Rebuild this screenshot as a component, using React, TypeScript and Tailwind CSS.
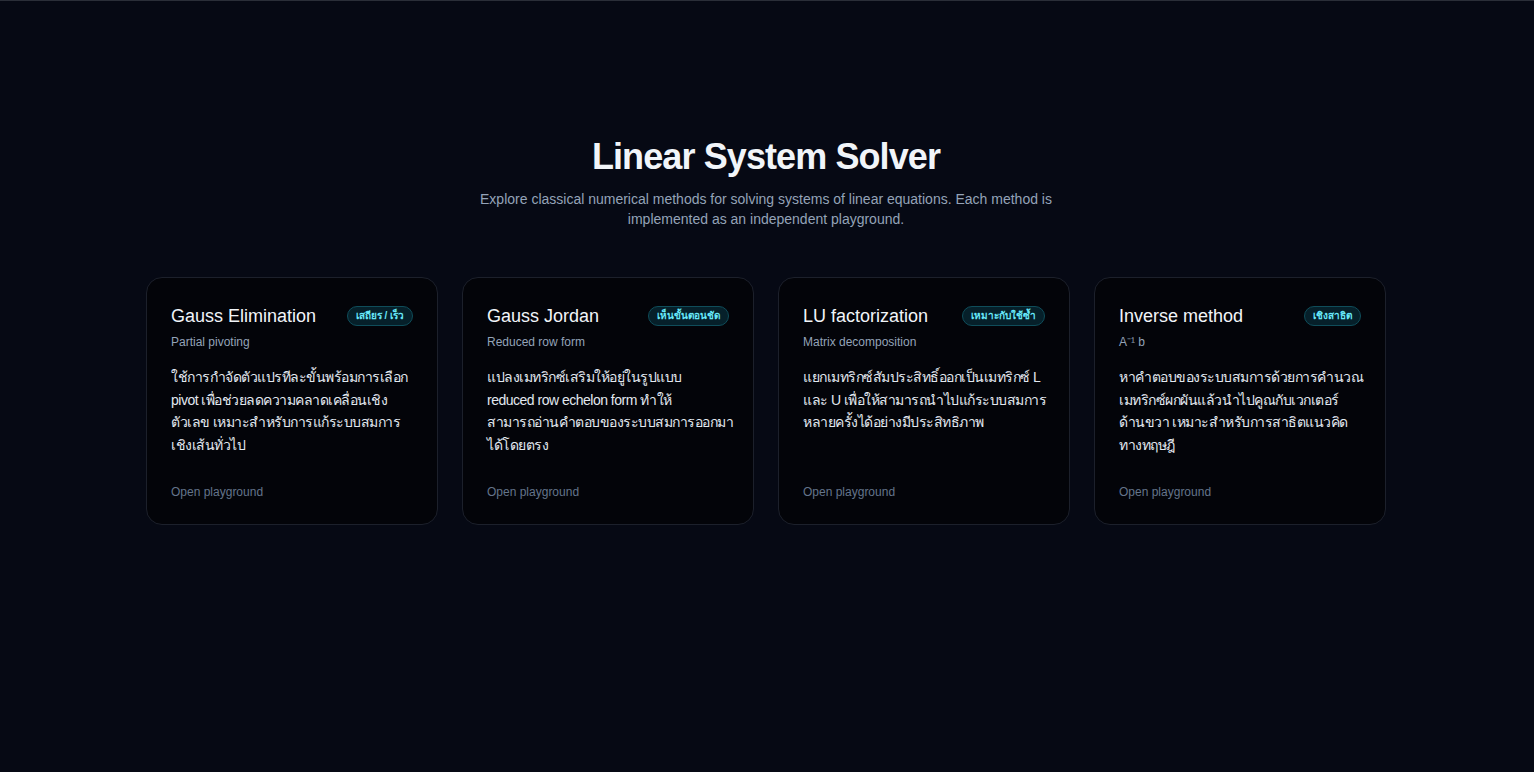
const methods = [
  {
    title: "Gauss Elimination",
    badge: "เสถียร / เร็ว",
    sub: "Partial pivoting",
    desc: [
      "ใช้การกำจัดตัวแปรทีละขั้นพร้อมการเลือก",
      "pivot เพื่อช่วยลดความคลาดเคลื่อนเชิง",
      "ตัวเลข เหมาะสำหรับการแก้ระบบสมการ",
      "เชิงเส้นทั่วไป",
    ],
  },
  {
    title: "Gauss Jordan",
    badge: "เห็นขั้นตอนชัด",
    sub: "Reduced row form",
    desc: [
      "แปลงเมทริกซ์เสริมให้อยู่ในรูปแบบ",
      "reduced row echelon form ทำให้",
      "สามารถอ่านคำตอบของระบบสมการออกมา",
      "ได้โดยตรง",
    ],
  },
  {
    title: "LU factorization",
    badge: "เหมาะกับใช้ซ้ำ",
    sub: "Matrix decomposition",
    desc: [
      "แยกเมทริกซ์สัมประสิทธิ์ออกเป็นเมทริกซ์ L",
      "และ U เพื่อให้สามารถนำไปแก้ระบบสมการ",
      "หลายครั้งได้อย่างมีประสิทธิภาพ",
    ],
  },
  {
    title: "Inverse method",
    badge: "เชิงสาธิต",
    sub: "A⁻¹ b",
    desc: [
      "หาคำตอบของระบบสมการด้วยการคำนวณ",
      "เมทริกซ์ผกผันแล้วนำไปคูณกับเวกเตอร์",
      "ด้านขวา เหมาะสำหรับการสาธิตแนวคิด",
      "ทางทฤษฎี",
    ],
  },
];

export default function App() {
  return (
    <div className="min-h-screen bg-[#060914] border-t border-[#2a2e38] font-['Liberation_Sans',sans-serif]">
      <main className="mx-auto w-[1242px] pr-[2px] pt-[136px] pb-24">
        <div className="text-center">
          <h1 className="text-4xl font-bold tracking-tight text-[#f1f5f9]">Linear System Solver</h1>
          <p className="mx-auto mt-3 max-w-xl text-sm leading-5 text-[#94a3b8]">
            Explore classical numerical methods for solving systems of linear equations. Each method is
            implemented as an independent playground.
          </p>
        </div>

        <div className="mt-12 grid grid-cols-4 gap-6">
          {methods.map((m) => (
            <div
              key={m.title}
              className="flex h-[248px] flex-col rounded-2xl border border-[#1c202b] bg-[#030409] p-6"
            >
              <div className="flex items-center justify-between gap-2">
                <h2 className="text-lg leading-7 text-[#f1f5f9]">{m.title}</h2>
                <span className="rounded-full border border-[#0f4d5a] bg-[#06202a] px-2 py-[3px] text-[10px] font-bold leading-3 text-[#67e8f9]">
                  {m.badge}
                </span>
              </div>
              <div className="mt-1 text-xs text-[#94a3b8]">{m.sub}</div>
              <p className="mt-4 whitespace-nowrap text-sm font-medium leading-[22.5px] tracking-[-0.5px] text-[#e2e8f0]">
                {m.desc.map((line, i) => (
                  <span key={i} className="block">
                    {line}
                  </span>
                ))}
              </p>
              <div className="mt-auto text-xs leading-4 text-[#64748b]">Open playground</div>
            </div>
          ))}
        </div>
      </main>
    </div>
  );
}
